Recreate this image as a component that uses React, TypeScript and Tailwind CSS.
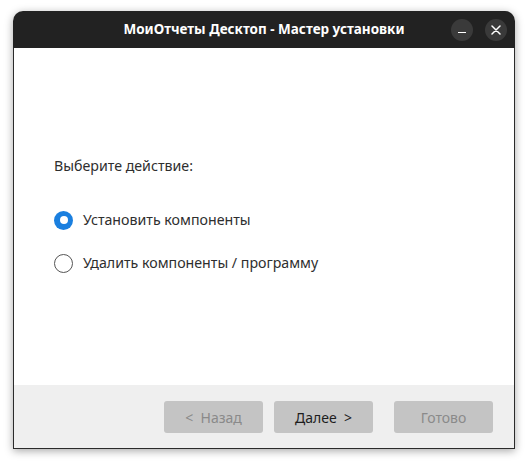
import { useState } from 'react'

function Radio({ checked, label, onClick }: { checked: boolean; label: string; onClick: () => void }) {
    return (
        <button onClick={onClick} className="flex items-center gap-[10px] h-[20px] text-left">
            {checked ? (
                <span className="w-[19px] h-[19px] rounded-full bg-[#1a7fdf] flex items-center justify-center">
                    <span className="w-[8px] h-[8px] rounded-full bg-white" />
                </span>
            ) : (
                <span className="w-[19px] h-[19px] rounded-full border border-[#555] bg-white" />
            )}
            <span className="text-[14.2px] text-[#2e2e2e]">{label}</span>
        </button>
    )
}

export default function App() {
    const [choice, setChoice] = useState<'install' | 'remove'>('install')

    return (
        <div
            className="w-[528px] h-[466px] bg-white pt-[11px] pl-[13px]"
            style={{ fontFamily: '"Noto Sans", "Open Sans", sans-serif' }}
        >
            <div className="w-[502px] h-[438px] flex flex-col rounded-t-[10px] shadow-[0_2px_8px_rgba(0,0,0,0.35)]">
                {/* Title bar */}
                <div className="relative h-[37px] bg-[#222222] rounded-t-[10px] flex items-center justify-center">
                    <span className="text-white text-[13.5px] font-bold">
                        МоиОтчеты Десктоп - Мастер установки
                    </span>
                    <div className="absolute right-[8px] top-[8px] flex gap-[12px]">
                        <button className="w-[22px] h-[22px] rounded-full bg-[#3a3a3a] flex items-center justify-center">
                            <span className="w-[8px] h-[1.5px] bg-white mt-[5px]" />
                        </button>
                        <button className="w-[22px] h-[22px] rounded-full bg-[#3a3a3a] flex items-center justify-center">
                            <svg width="10" height="10" viewBox="0 0 10 10">
                                <path d="M1 1L9 9M9 1L1 9" stroke="white" strokeWidth="1.5" strokeLinecap="round" />
                            </svg>
                        </button>
                    </div>
                </div>

                {/* Body */}
                <div className="flex-1 flex flex-col border-x border-b border-[#2b2b2b]">
                    <div className="flex-1 bg-white pl-[40px] pt-[108px]">
                        <p className="text-[14.2px] text-[#2e2e2e] leading-[20px]">Выберите действие:</p>
                        <div className="mt-[34px] flex flex-col gap-[23px]">
                            <Radio
                                checked={choice === 'install'}
                                label="Установить компоненты"
                                onClick={() => setChoice('install')}
                            />
                            <Radio
                                checked={choice === 'remove'}
                                label="Удалить компоненты / программу"
                                onClick={() => setChoice('remove')}
                            />
                        </div>
                    </div>

                    {/* Footer */}
                    <div className="h-[63px] bg-[#efefef] flex items-start pt-[16px] pl-[150px]">
                        <button className="w-[99px] h-[32px] rounded-[3px] bg-[#c4c4c4] text-[14px] text-[#8a8a8a]">
                            &lt;&nbsp; Назад
                        </button>
                        <button className="ml-[11px] w-[99px] h-[32px] rounded-[3px] bg-[#c4c4c4] text-[14px] text-[#1e1e1e]">
                            Далее&nbsp; &gt;
                        </button>
                        <button className="ml-[21px] w-[99px] h-[32px] rounded-[3px] bg-[#c4c4c4] text-[14px] text-[#8a8a8a]">
                            Готово
                        </button>
                    </div>
                </div>
            </div>
        </div>
    )
}
